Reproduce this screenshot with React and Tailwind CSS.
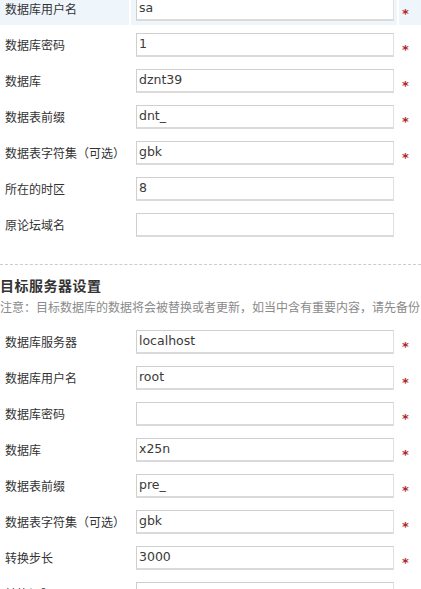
import React from 'react';

const sourceRows = [
    { label: '数据库用户名', value: 'sa', required: true, active: true },
    { label: '数据库密码', value: '1', required: true },
    { label: '数据库', value: 'dznt39', required: true },
    { label: '数据表前缀', value: 'dnt_', required: true },
    { label: '数据表字符集（可选）', value: 'gbk', required: true },
    { label: '所在的时区', value: '8' },
    { label: '原论坛域名', value: '' },
];

const targetRows = [
    { label: '数据库服务器', value: 'localhost', required: true },
    { label: '数据库用户名', value: 'root', required: true },
    { label: '数据库密码', value: '', required: true },
    { label: '数据库', value: 'x25n', required: true },
    { label: '数据表前缀', value: 'pre_', required: true },
    { label: '数据表字符集（可选）', value: 'gbk', required: true },
    { label: '转换步长', value: '3000', required: true },
    { label: '转换间隔', value: '', required: true },
];

const cjk = { fontFamily: '"Noto Sans CJK SC", "Noto Sans", sans-serif' };

const Row = ({ label, value, required, active }) => {
    const bg = active ? 'bg-[#eef5fb]' : 'bg-white';
    return (
        <div className="flex gap-[2px] h-[34px] shrink-0">
            <div className={`w-[129px] shrink-0 pl-[5px] pt-[6px] pb-[4px] flex items-center text-[12px] text-[#333] ${bg}`} style={cjk}>
                {label}
            </div>
            <div className={`w-[266px] shrink-0 pl-[5px] pt-[6px] pb-[4px] ${bg}`}>
                <div className="w-[258px] h-[24px] bg-white border border-[#cfcfcf] border-b-2 border-b-[#dadada] border-r-[#e0e0e0] flex items-center pl-[2px] text-[12.5px] text-[#3a3a3a] font-['DejaVu_Sans',sans-serif]">
                    {value}
                </div>
            </div>
            <div className={`flex-1 pl-[3px] pt-[9px] ${bg}`}>
                {required && (
                    <span className="text-[13px] leading-[20px] font-bold text-[#b0262f] font-['DejaVu_Sans',sans-serif]">*</span>
                )}
            </div>
        </div>
    );
};

const App = () => {
    return (
        <div className="w-[421px] h-[589px] overflow-hidden bg-white">
            <div className="mt-[-11px] flex flex-col">
                <div className="flex flex-col gap-[2px] py-[2px]">
                    {sourceRows.map((row, i) => (
                        <Row key={i} {...row} />
                    ))}
                </div>

                <div className="mt-[21px] border-t border-dashed border-[#cccccc] h-0"></div>

                <h3 className="mt-[10px] text-[14px] leading-[20px] font-bold text-[#333] tracking-[0.5px]" style={cjk}>
                    目标服务器设置
                </h3>
                <p className="mt-[3px] text-[12px] leading-[18px] text-[#8a8a8a] whitespace-nowrap" style={cjk}>
                    注意：目标数据库的数据将会被替换或者更新，如当中含有重要内容，请先备份
                </p>

                <div className="mt-[6px] flex flex-col gap-[2px] py-[2px]">
                    {targetRows.map((row, i) => (
                        <Row key={i} {...row} />
                    ))}
                </div>
            </div>
        </div>
    );
};

export default App;
